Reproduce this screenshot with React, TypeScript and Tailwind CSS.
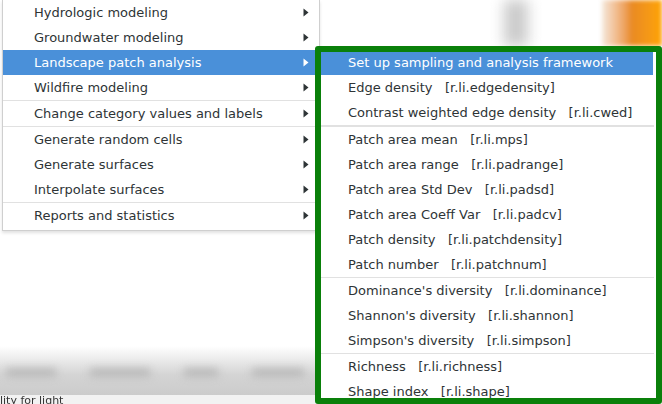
import React from 'react'

type Item = { label: string; cmd?: string; active?: boolean; sep?: boolean }

const leftItems: Item[] = [
  { label: 'Hydrologic modeling' },
  { label: 'Groundwater modeling' },
  { label: 'Landscape patch analysis', active: true },
  { label: 'Wildfire modeling' },
  { sep: true, label: '' },
  { label: 'Change category values and labels' },
  { sep: true, label: '' },
  { label: 'Generate random cells' },
  { label: 'Generate surfaces' },
  { label: 'Interpolate surfaces' },
  { sep: true, label: '' },
  { label: 'Reports and statistics' },
]

const subItems: Item[] = [
  { label: 'Edge density', cmd: 'r.li.edgedensity' },
  { label: 'Contrast weighted edge density', cmd: 'r.li.cwed' },
  { sep: true, label: '' },
  { label: 'Patch area mean', cmd: 'r.li.mps' },
  { label: 'Patch area range', cmd: 'r.li.padrange' },
  { label: 'Patch area Std Dev', cmd: 'r.li.padsd' },
  { label: 'Patch area Coeff Var', cmd: 'r.li.padcv' },
  { label: 'Patch density', cmd: 'r.li.patchdensity' },
  { label: 'Patch number', cmd: 'r.li.patchnum' },
  { sep: true, label: '' },
  { label: "Dominance's diversity", cmd: 'r.li.dominance' },
  { label: "Shannon's diversity", cmd: 'r.li.shannon' },
  { label: "Simpson's diversity", cmd: 'r.li.simpson' },
  { sep: true, label: '' },
  { label: 'Richness', cmd: 'r.li.richness' },
  { label: 'Shape index', cmd: 'r.li.shape' },
]

function Arrow({ active }: { active?: boolean }) {
  return (
    <svg width="6" height="9" viewBox="0 0 6 9" className="shrink-0">
      <path d="M0.5 0.5 L5.5 4.5 L0.5 8.5 Z" fill={active ? '#ffffff' : '#2e3436'} />
    </svg>
  )
}

export default function App() {
  return (
    <div
      className="relative flex flex-col w-[662px] h-[404px] overflow-hidden bg-white text-[13px] text-[#2e3436]"
      style={{ fontFamily: '"DejaVu Sans", Verdana, sans-serif' }}
    >
      <div className="flex items-start">
        {/* parent menu */}
        <div className="ml-[2px] w-[318px] shrink-0 bg-white border-l border-r border-b border-[#cfcfcf] pb-[2px] shadow-[0_2px_3px_rgba(0,0,0,0.12)]">
          {leftItems.map((it, i) =>
            it.sep ? (
              <div key={i} className="h-px bg-[#e1e1e1]" />
            ) : (
              <div
                key={i}
                className={`flex items-center justify-between h-[25px] pl-[31px] pr-[10px] ${
                  it.active ? 'bg-[#4a90d9] text-white' : ''
                }`}
              >
                <span className="whitespace-nowrap">{it.label}</span>
                <Arrow active={it.active} />
              </div>
            )
          )}
        </div>

        {/* blurred application window behind the menus */}
        <div className="flex flex-1 h-[46px] overflow-hidden">
          <div className="w-[184px] shrink-0" />
          <div className="w-[24px] shrink-0 bg-[#cbcbcb] blur-[7px]" />
          <div className="flex-1" />
          <div className="w-[60px] shrink-0 bg-linear-to-r from-[#f4e8dc] via-[#e98a22] to-[#ffa400] blur-[2px]" />
        </div>
      </div>

      <div className="flex-1" />

      {/* blurred toolbar at the bottom */}
      <div className="flex flex-col h-[58px] bg-linear-to-b from-white via-[#d4d4d4] to-[#c8c8c8]">
        <div className="flex items-center gap-[34px] mt-[23px] pl-[6px]">
          <div className="w-[50px] h-[7px] bg-[#b3b3b3] blur-[4px]" />
          <div className="w-[60px] h-[7px] bg-[#b3b3b3] blur-[4px]" />
          <div className="w-[34px] h-[7px] bg-[#b3b3b3] blur-[4px]" />
          <div className="w-[52px] h-[7px] bg-[#b3b3b3] blur-[4px]" />
        </div>
        <div className="flex-1" />
        <div className="h-[9px] bg-[#f2f2f2] overflow-hidden">
          <span className="block text-[11px] leading-[10px] mt-[1px] text-[#333] blur-[0.6px]">lity for light</span>
        </div>
      </div>

      {/* submenu, framed in green */}
      <div className="absolute left-[315px] top-[46px] w-[347px] h-[358px] border-[6px] border-[#0a800a] rounded-[3px] bg-white overflow-hidden">
        <div className="flex items-center h-[23px] pl-[27px] mr-[3px] bg-[#4a90d9] text-white">
          <span className="whitespace-nowrap -mt-[1px]">Set up sampling and analysis framework</span>
        </div>
        {subItems.map((it, i) =>
          it.sep ? (
            <div key={i} className={`mr-[2px] bg-[#e1e1e1] ${i === 2 ? 'h-[2px]' : 'h-px'}`} />
          ) : (
            <div key={i} className="flex items-center h-[25px] pl-[27px]">
              <span className="whitespace-pre">
                {it.label}
                {'   '}[{it.cmd}]
              </span>
            </div>
          )
        )}
      </div>
    </div>
  )
}
